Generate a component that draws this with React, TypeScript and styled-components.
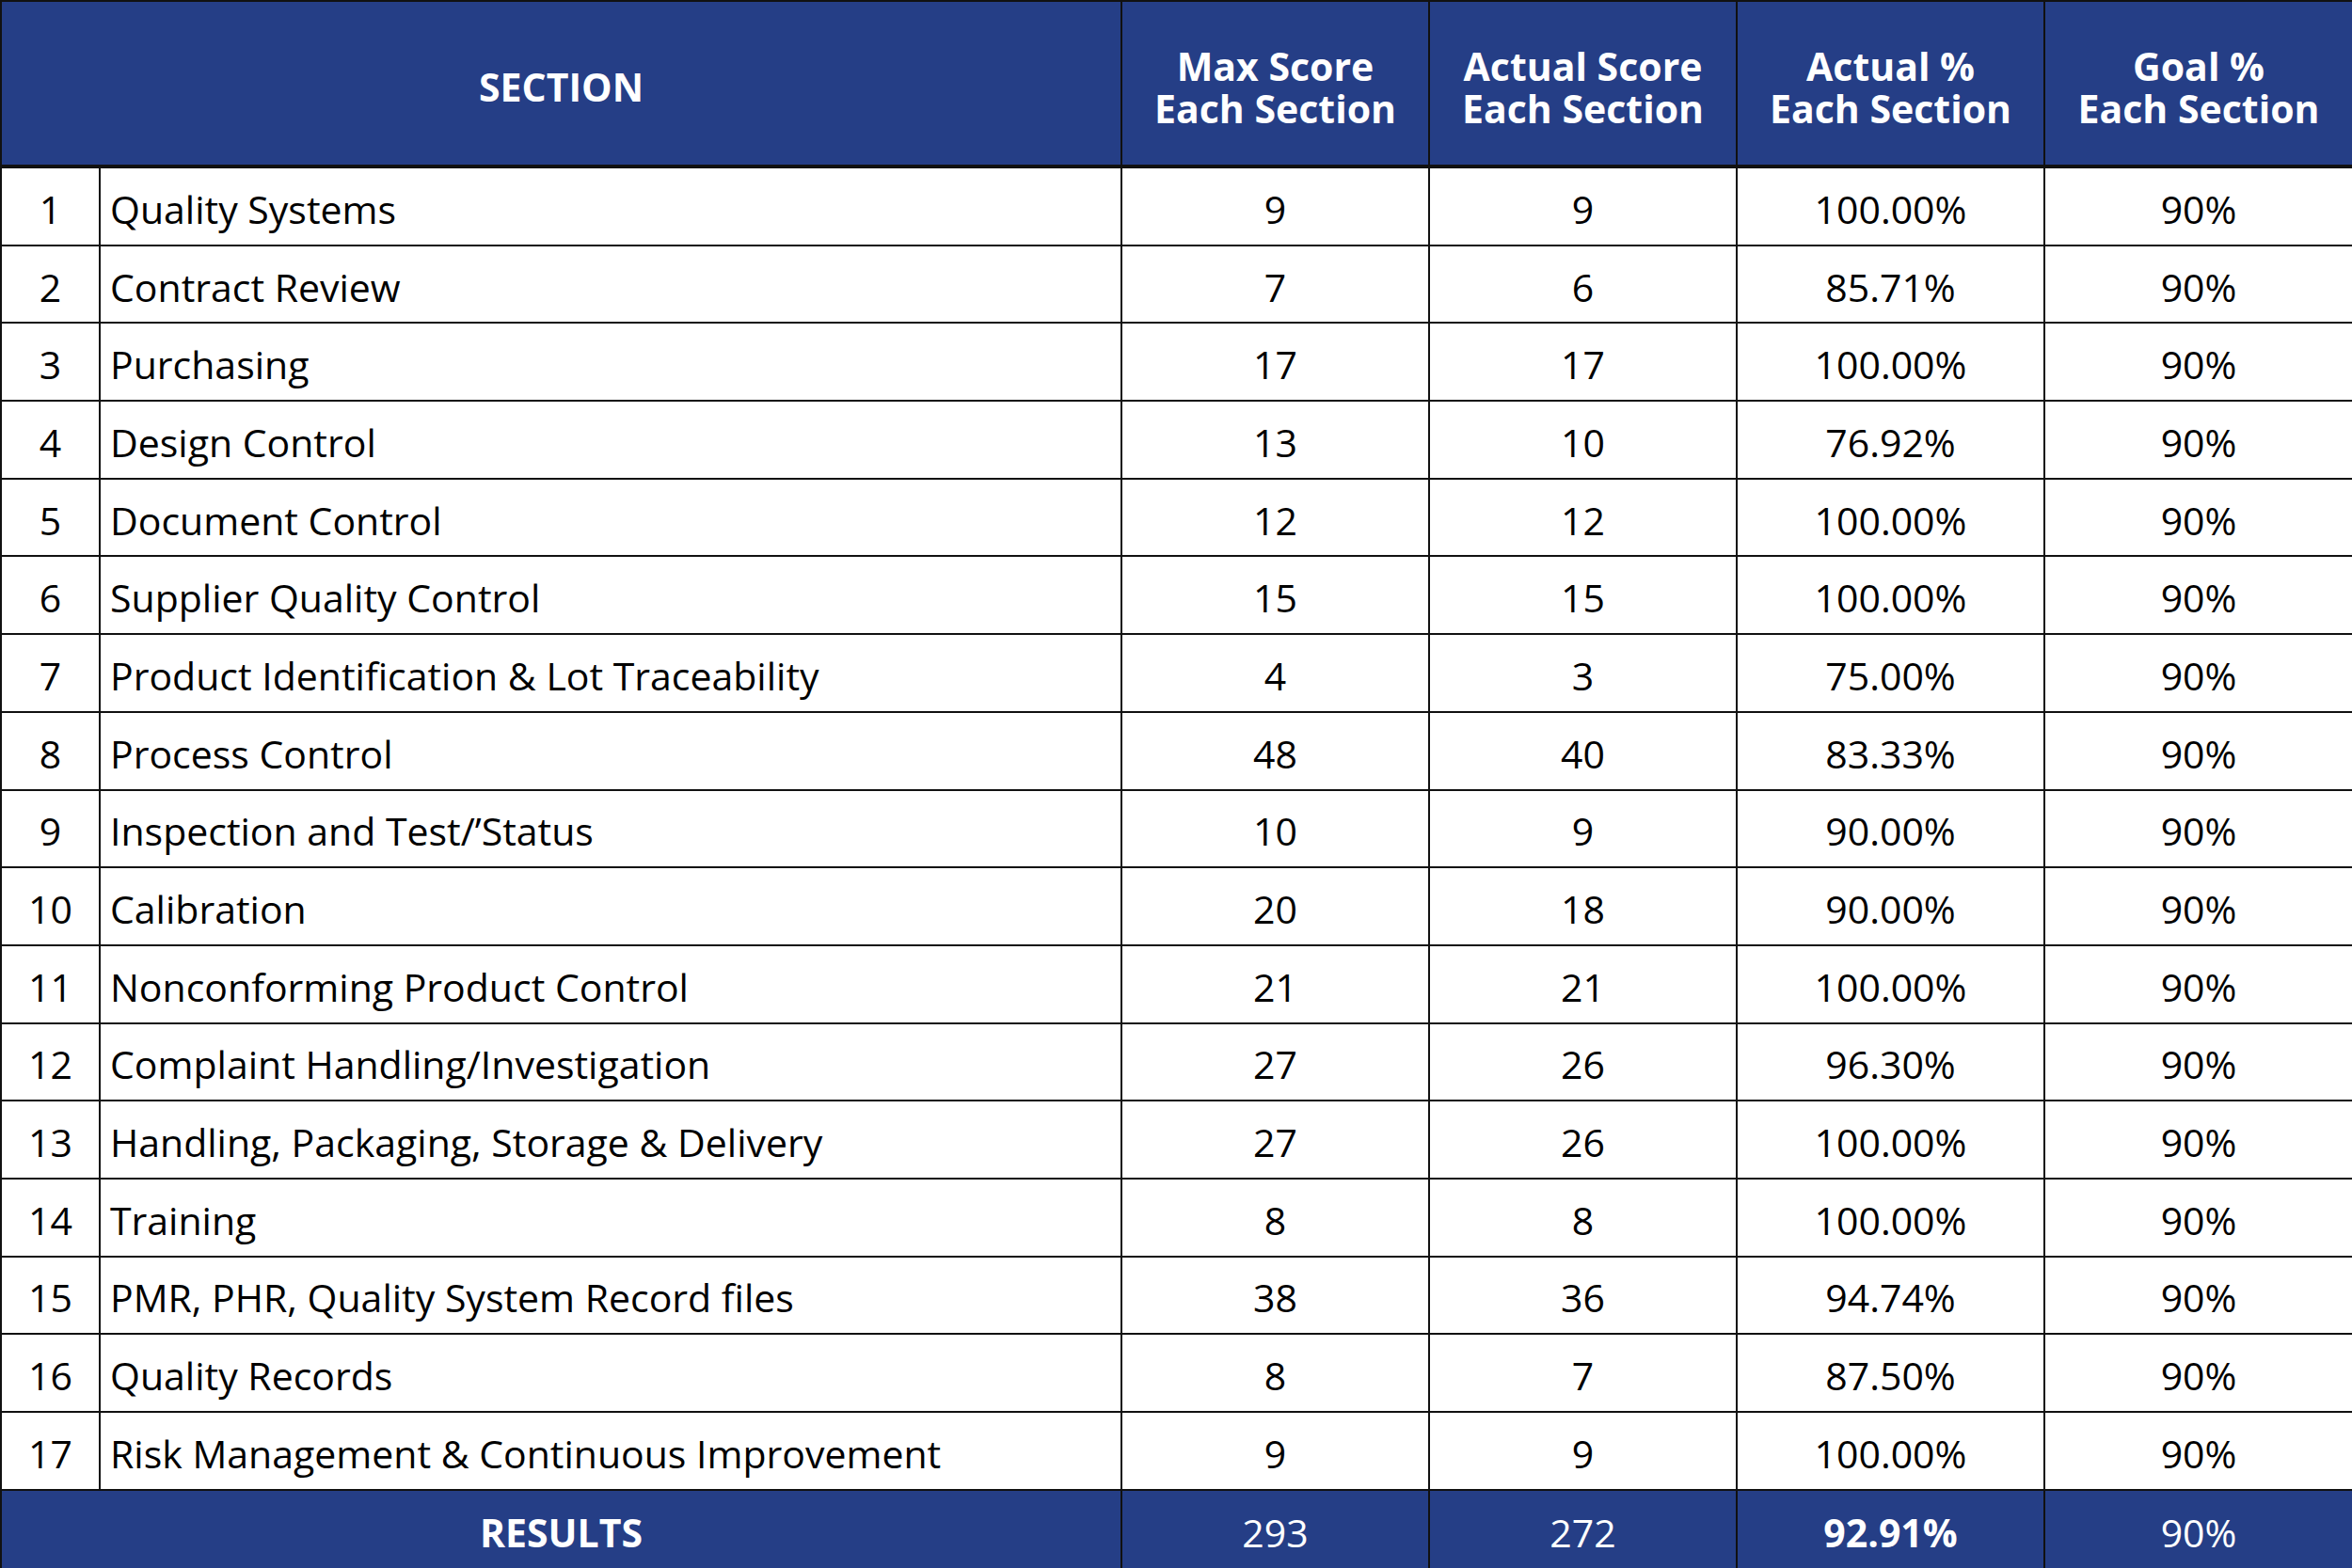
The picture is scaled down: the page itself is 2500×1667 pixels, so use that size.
import React from 'react';
import styled, {createGlobalStyle} from "styled-components";

const colors = {
    navy: '#253e86',
    line: '#111111',
    text: '#000000',
    white: '#ffffff',
}

const GlobalStyle = createGlobalStyle`
  html, body {
    margin: 0;
    padding: 0;
    background: ${colors.white};
  }
  body {
    font-family: "Open Sans", "Noto Sans", Arial, sans-serif;
  }
`

const Table = styled.table`
  width: 2500px;
  border-collapse: collapse;
  table-layout: fixed;
  color: ${colors.text};
`

const HeadCell = styled.th`
  background: ${colors.navy};
  color: ${colors.white};
  height: 165px;
  border: 2px solid ${colors.line};
  border-bottom-width: 4px;
  font-size: 41px;
  font-weight: 700;
  line-height: 45px;
  text-align: center;
  padding: 8px 4px 0;
  white-space: nowrap;
`

const Cell = styled.td<{ $align?: 'left' | 'center' }>`
  height: 75.7px;
  border: 2px solid ${colors.line};
  font-size: 41px;
  line-height: 48px;
  text-align: ${props => props.$align ?? 'center'};
  padding: ${props => (props.$align === 'left' ? '5px 0 0 10px' : '5px 0 0 0')};
  white-space: nowrap;
`

const FootCell = styled.td<{ $bold?: boolean }>`
  background: ${colors.navy};
  color: ${colors.white};
  height: 78px;
  border: 2px solid ${colors.line};
  font-size: 41px;
  line-height: 48px;
  font-weight: ${props => (props.$bold ? 700 : 400)};
  text-align: center;
  padding-top: 5px;
`

interface SectionRow {
    name: string;
    max: number;
    actual: number;
    pct: string;
}

const rows: SectionRow[] = [
    {name: 'Quality Systems', max: 9, actual: 9, pct: '100.00%'},
    {name: 'Contract Review', max: 7, actual: 6, pct: '85.71%'},
    {name: 'Purchasing', max: 17, actual: 17, pct: '100.00%'},
    {name: 'Design Control', max: 13, actual: 10, pct: '76.92%'},
    {name: 'Document Control', max: 12, actual: 12, pct: '100.00%'},
    {name: 'Supplier Quality Control', max: 15, actual: 15, pct: '100.00%'},
    {name: 'Product Identification & Lot Traceability', max: 4, actual: 3, pct: '75.00%'},
    {name: 'Process Control', max: 48, actual: 40, pct: '83.33%'},
    {name: 'Inspection and Test/’Status', max: 10, actual: 9, pct: '90.00%'},
    {name: 'Calibration', max: 20, actual: 18, pct: '90.00%'},
    {name: 'Nonconforming Product Control', max: 21, actual: 21, pct: '100.00%'},
    {name: 'Complaint Handling/Investigation', max: 27, actual: 26, pct: '96.30%'},
    {name: 'Handling, Packaging, Storage & Delivery', max: 27, actual: 26, pct: '100.00%'},
    {name: 'Training', max: 8, actual: 8, pct: '100.00%'},
    {name: 'PMR, PHR, Quality System Record files', max: 38, actual: 36, pct: '94.74%'},
    {name: 'Quality Records', max: 8, actual: 7, pct: '87.50%'},
    {name: 'Risk Management & Continuous Improvement', max: 9, actual: 9, pct: '100.00%'},
]

const GOAL = '90%'

const App: React.FC = () => {
    return (
        <>
            <GlobalStyle/>
            <Table>
                <colgroup>
                    <col style={{width: 105}}/>
                    <col style={{width: 1086}}/>
                    <col style={{width: 327}}/>
                    <col style={{width: 327}}/>
                    <col style={{width: 327}}/>
                    <col style={{width: 328}}/>
                </colgroup>
                <thead>
                <tr>
                    <HeadCell colSpan={2}>SECTION</HeadCell>
                    <HeadCell>Max Score<br/>Each Section</HeadCell>
                    <HeadCell>Actual Score<br/>Each Section</HeadCell>
                    <HeadCell>Actual %<br/>Each Section</HeadCell>
                    <HeadCell>Goal %<br/>Each Section</HeadCell>
                </tr>
                </thead>
                <tbody>
                {rows.map((row, i) => (
                    <tr key={row.name}>
                        <Cell>{i + 1}</Cell>
                        <Cell $align="left">{row.name}</Cell>
                        <Cell>{row.max}</Cell>
                        <Cell>{row.actual}</Cell>
                        <Cell>{row.pct}</Cell>
                        <Cell>{GOAL}</Cell>
                    </tr>
                ))}
                </tbody>
                <tfoot>
                <tr>
                    <FootCell colSpan={2} $bold>RESULTS</FootCell>
                    <FootCell>293</FootCell>
                    <FootCell>272</FootCell>
                    <FootCell $bold>92.91%</FootCell>
                    <FootCell>{GOAL}</FootCell>
                </tr>
                </tfoot>
            </Table>
        </>
    );
}

export default App;
